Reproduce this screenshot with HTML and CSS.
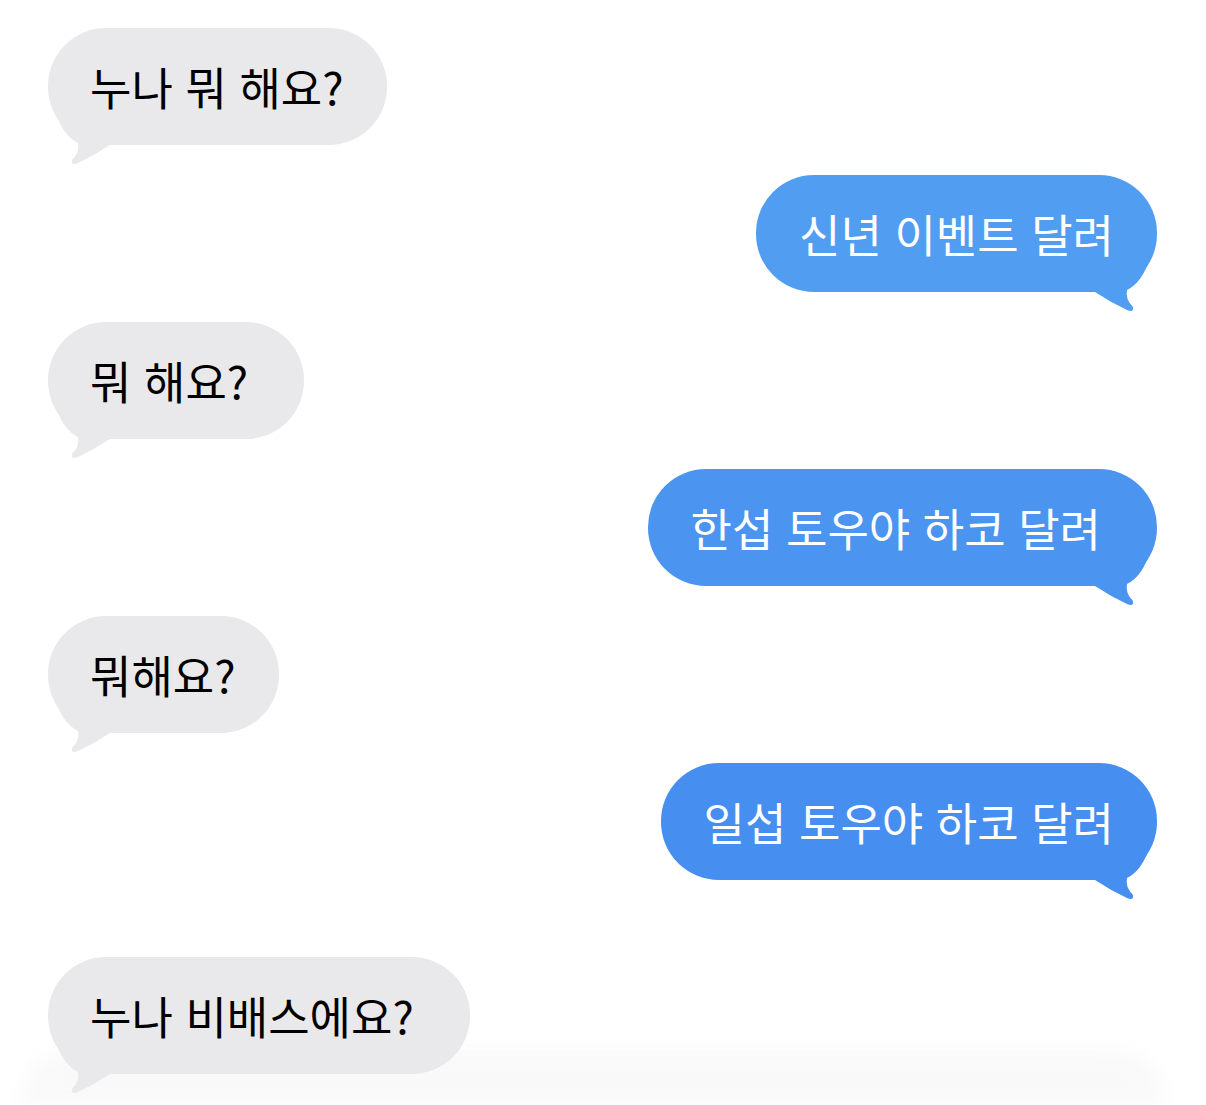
FILE: index.html
```html
<!DOCTYPE html>
<html lang="ko">
<head>
    <meta charset="UTF-8">
    <title>Messages</title>
    <link rel="stylesheet" href="styles.css">
</head>
<body>
    <div class="chat">
        <div class="msg in">
            <div class="bubble">누나 뭐 해요?</div>
            <svg class="tail" viewBox="0 0 64 56"><path d="M7 0 Q14 25 30 33 Q32 42 24 50 Q23 56 30 53 Q47 45 62 35 L62 0 Z"/></svg>
        </div>
        <div class="msg out">
            <div class="bubble">신년 이벤트 달려</div>
            <svg class="tail" viewBox="0 0 64 56"><path d="M7 0 Q14 25 30 33 Q32 42 24 50 Q23 56 30 53 Q47 45 62 35 L62 0 Z"/></svg>
        </div>
        <div class="msg in">
            <div class="bubble wide">뭐 해요?</div>
            <svg class="tail" viewBox="0 0 64 56"><path d="M7 0 Q14 25 30 33 Q32 42 24 50 Q23 56 30 53 Q47 45 62 35 L62 0 Z"/></svg>
        </div>
        <div class="msg out mid">
            <div class="bubble wide">한섭 토우야 하코 달려</div>
            <svg class="tail" viewBox="0 0 64 56"><path d="M7 0 Q14 25 30 33 Q32 42 24 50 Q23 56 30 53 Q47 45 62 35 L62 0 Z"/></svg>
        </div>
        <div class="msg in">
            <div class="bubble">뭐해요?</div>
            <svg class="tail" viewBox="0 0 64 56"><path d="M7 0 Q14 25 30 33 Q32 42 24 50 Q23 56 30 53 Q47 45 62 35 L62 0 Z"/></svg>
        </div>
        <div class="msg out low">
            <div class="bubble">일섭 토우야 하코 달려</div>
            <svg class="tail" viewBox="0 0 64 56"><path d="M7 0 Q14 25 30 33 Q32 42 24 50 Q23 56 30 53 Q47 45 62 35 L62 0 Z"/></svg>
        </div>
        <div class="msg in last">
            <div class="bubble wide">누나 비배스에요?</div>
            <svg class="tail" viewBox="0 0 64 56"><path d="M7 0 Q14 25 30 33 Q32 42 24 50 Q23 56 30 53 Q47 45 62 35 L62 0 Z"/></svg>
        </div>
    </div>
    <div class="fog"></div>
</body>
</html>
```

FILE: styles.css
```css
html, body {
    height: 100%;
}
body {
    position: relative;
    margin: 0;
    padding: 0;
    background-color: #fff;
    font-family: "Noto Sans CJK KR", "Noto Sans", sans-serif;
    overflow: hidden;
}
.chat {
    position: relative;
    z-index: 1;
    display: flex;
    flex-direction: column;
    gap: 30px;
    padding: 28px 49px 0 48px;
}
.msg {
    position: relative;
    display: flex;
}
.msg.in {
    justify-content: flex-start;
}
.msg.out {
    justify-content: flex-end;
}
.msg.last {
    margin-top: 47px;
}
.bubble {
    position: relative;
    z-index: 1;
    height: 117px;
    box-sizing: border-box;
    padding: 0 43px 0 42px;
    border-radius: 58px;
    display: flex;
    align-items: center;
    font-size: 45px;
    white-space: nowrap;
}
.bubble.wide {
    padding-right: 56px;
}
.in .bubble {
    background-color: #e9e9eb;
    color: #000;
}
.out .bubble {
    background-color: #519df1;
    color: #fff;
    padding-left: 43px;
}
.out.mid .bubble {
    background-color: #4b95f1;
}
.out.low .bubble {
    background-color: #468ef0;
}
.tail {
    position: absolute;
    top: 82px;
    width: 64px;
    height: 56px;
}
.in .tail {
    left: 0;
    fill: #e9e9eb;
}
.out .tail {
    right: 0;
    transform: scaleX(-1);
    fill: #519df1;
}
.out.mid .tail {
    fill: #4b95f1;
}
.out.low .tail {
    fill: #468ef0;
}
.fog {
    position: absolute;
    left: 20px;
    right: 40px;
    bottom: 0;
    height: 55px;
    background-color: #f9f9fa;
    border-radius: 100px 100px 0 0;
    filter: blur(10px);
}
```
